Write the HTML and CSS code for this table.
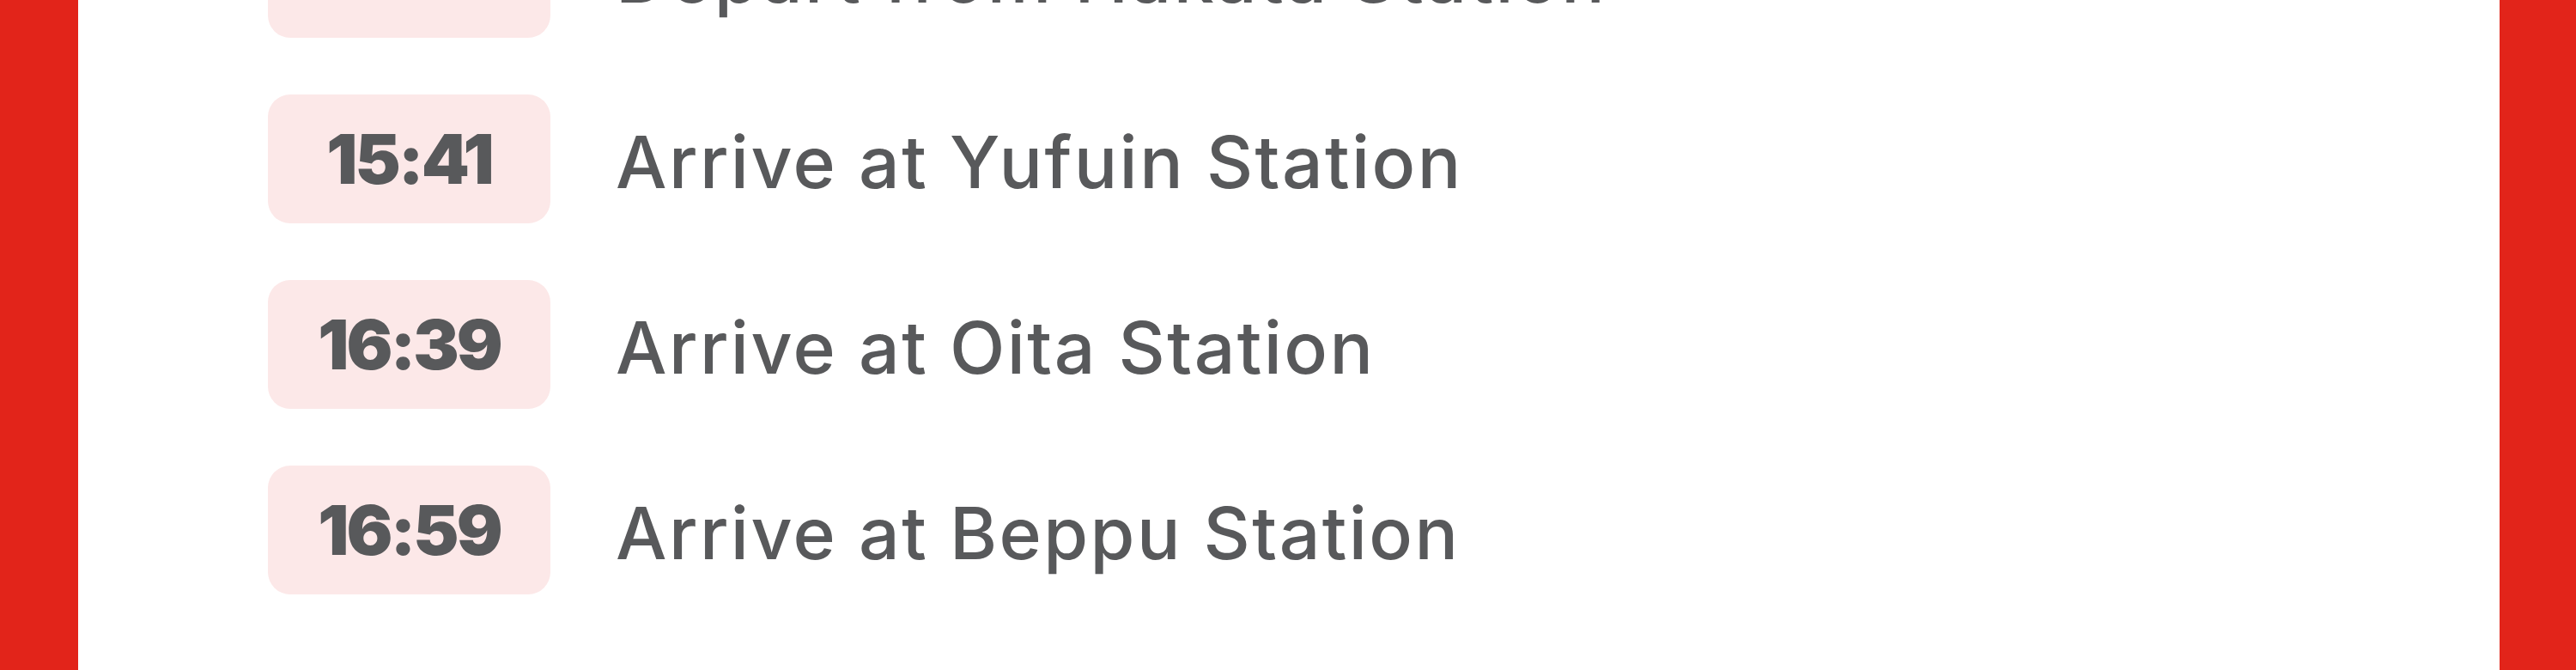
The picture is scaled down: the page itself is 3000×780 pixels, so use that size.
FILE: index.html
```html
<!DOCTYPE html>
<html lang="en">
<head>
<meta charset="utf-8">
<title>Timetable</title>
<link rel="stylesheet" href="styles.css">
</head>
<body>
<div class="frame">
  <main class="panel">
    <ul class="timeline">
      <li class="stop"><span class="time">13:31</span><span class="label">Depart from Hakata Station</span></li>
      <li class="stop"><span class="time">15:41</span><span class="label">Arrive at Yufuin Station</span></li>
      <li class="stop"><span class="time">16:39</span><span class="label">Arrive at Oita Station</span></li>
      <li class="stop"><span class="time">16:59</span><span class="label">Arrive at Beppu Station</span></li>
    </ul>
  </main>
</div>
</body>
</html>
```

FILE: styles.css
```css
html, body {
  margin: 0;
  padding: 0;
  height: 100%;
  overflow: hidden;
}

body {
  background: #e2241a;
  font-family: "Inter", "Noto Sans", sans-serif;
  color: #58595b;
}

.frame {
  height: 780px;
  display: flex;
  padding: 0 89px 0 91px;
}

.panel {
  flex: 1;
  background: #ffffff;
  overflow: hidden;
}

.timeline {
  list-style: none;
  margin: -106px 0 0 0;
  padding: 0 0 0 221px;
  display: flex;
  flex-direction: column;
  gap: 66px;
}

.stop {
  display: flex;
  align-items: center;
  gap: 76px;
  height: 150px;
}

.time {
  flex: 0 0 auto;
  width: 329px;
  height: 150px;
  box-sizing: border-box;
  border-radius: 26px;
  background: #fce8e8;
  display: flex;
  align-items: center;
  justify-content: center;
  font-weight: 900;
  font-size: 80px;
  letter-spacing: -3px;
  line-height: 1;
}

.label {
  font-size: 84px;
  font-weight: 500;
  letter-spacing: 2.4px;
  line-height: 1;
  padding-top: 8px;
}
```
